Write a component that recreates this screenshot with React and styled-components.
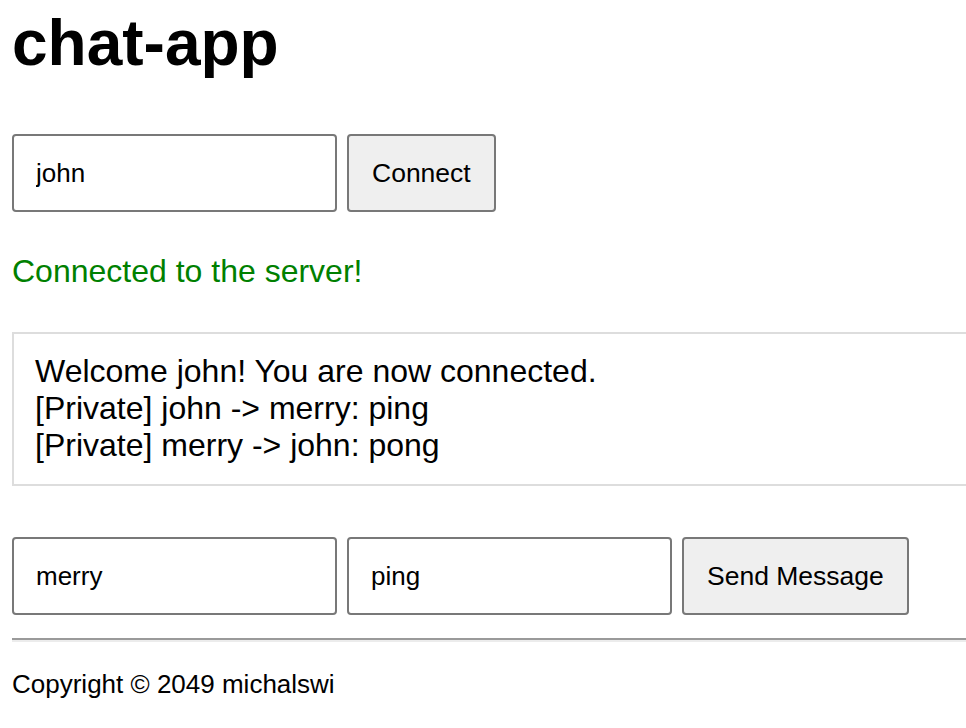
import React from "react";
import styled, { createGlobalStyle } from "styled-components";

const Global = createGlobalStyle`
  html, body { margin: 0; padding: 0; overflow: hidden; background: #fff; }
  body { font-family: "Liberation Sans", Arial, sans-serif; color: #000; }
`;

const Page = styled.div`
  display: flex;
  flex-direction: column;
  width: 1000px;
  padding-left: 12px;
  box-sizing: border-box;
`;

const Title = styled.h1`
  margin: 0;
  padding-top: 7px;
  font-size: 64px;
  line-height: 73px;
  font-weight: bold;
`;

const Row = styled.div`
  display: flex;
  gap: 10px;
  margin-top: ${(p) => p.$top}px;
`;

const Field = styled.input`
  box-sizing: border-box;
  width: 325px;
  height: 78px;
  padding: 0 22px;
  border: 2px solid #787878;
  border-radius: 4px;
  font-family: "Liberation Sans", Arial, sans-serif;
  font-size: 26px;
  color: #000;
  background: #fff;
  outline: none;
`;

const Button = styled.button`
  box-sizing: border-box;
  height: 78px;
  padding: 0 23px;
  border: 2px solid #787878;
  border-radius: 4px;
  background: #efefef;
  font-family: "Liberation Sans", Arial, sans-serif;
  font-size: 26.5px;
  color: #000;
`;

const Status = styled.div`
  margin-top: 41px;
  font-size: 32px;
  line-height: 37px;
  color: #008000;
`;

const Messages = styled.div`
  margin-top: 42px;
  border: 2px solid #dddddd;
  padding: 19px 21px 20px;
  font-size: 32px;
  line-height: 37px;
`;

const Line = styled.div``;

const Rule = styled.hr`
  margin: 23px 0 0;
  height: 0;
  border: none;
  border-top: 2px solid #9a9a9a;
  border-bottom: 2px solid #ececec;
`;

const Footer = styled.footer`
  margin-top: 27px;
  font-size: 26px;
  line-height: 30px;
`;

export default function App() {
  return (
    <>
      <Global />
      <Page>
        <Title>chat-app</Title>
        <Row $top={54}>
          <Field defaultValue="john" />
          <Button>Connect</Button>
        </Row>
        <Status>Connected to the server!</Status>
        <Messages>
          <Line>Welcome john! You are now connected.</Line>
          <Line>[Private] john -&gt; merry: ping</Line>
          <Line>[Private] merry -&gt; john: pong</Line>
        </Messages>
        <Row $top={51}>
          <Field defaultValue="merry" />
          <Field defaultValue="ping" />
          <Button>Send Message</Button>
        </Row>
        <Rule />
        <Footer>Copyright © 2049 michalswi</Footer>
      </Page>
    </>
  );
}
